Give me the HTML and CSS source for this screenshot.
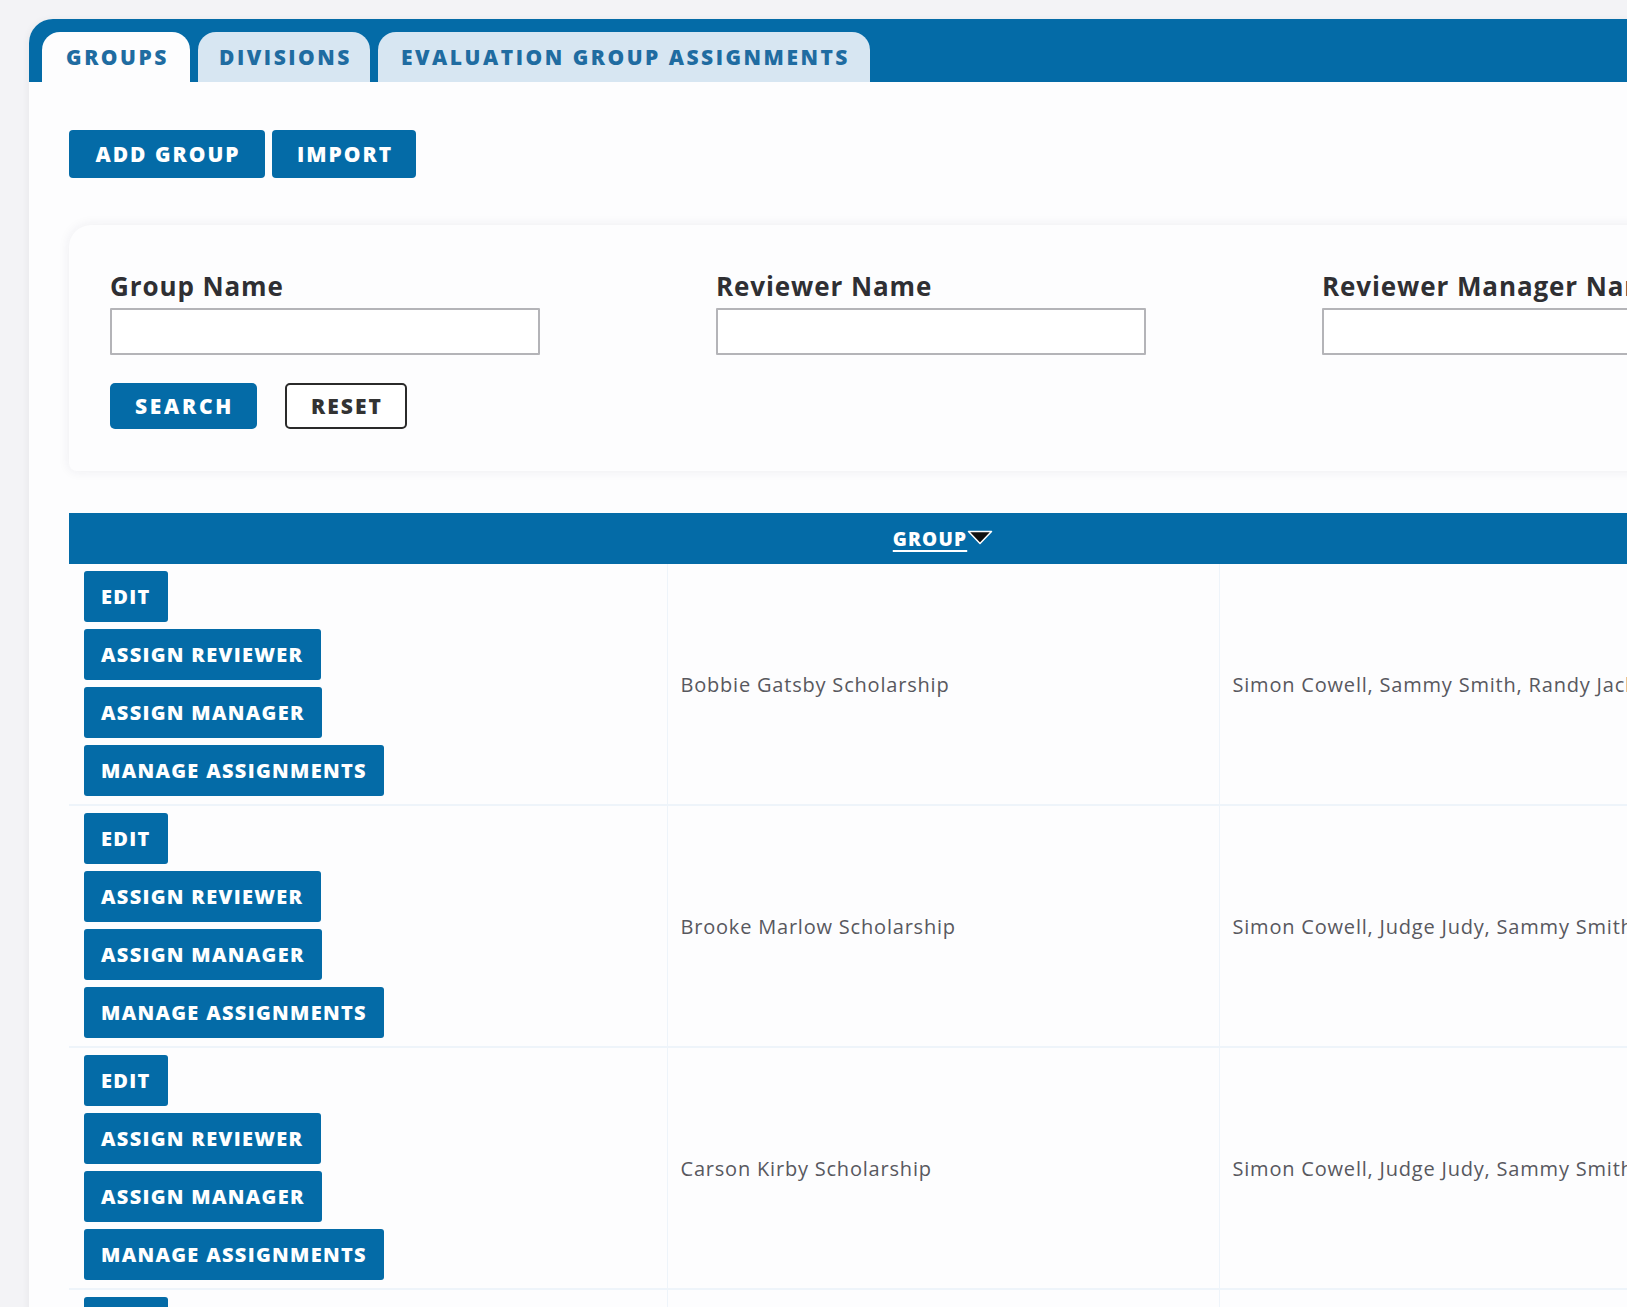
FILE: index.html
```html
<!DOCTYPE html>
<html lang="en">
<head>
<meta charset="utf-8">
<title>Groups</title>
<link rel="stylesheet" href="styles.css">
</head>
<body>
<div class="app">
  <div class="panel">
    <div class="tabbar">
      <div class="tab active">GROUPS</div>
      <div class="tab">DIVISIONS</div>
      <div class="tab">EVALUATION GROUP ASSIGNMENTS</div>
    </div>
    <div class="content">
      <div class="toolbar">
        <button class="btn btn-add">ADD GROUP</button>
        <button class="btn btn-import">IMPORT</button>
      </div>
      <div class="filter-card">
        <div class="fields">
          <div class="field">
            <label class="label">Group Name</label>
            <input class="input" type="text">
          </div>
          <div class="field">
            <label class="label">Reviewer Name</label>
            <input class="input" type="text">
          </div>
          <div class="field">
            <label class="label">Reviewer Manager Name</label>
            <input class="input" type="text">
          </div>
        </div>
        <div class="actions">
          <button class="btn btn-search">SEARCH</button>
          <button class="btn-outline">RESET</button>
        </div>
      </div>
      <table class="grid">
        <colgroup>
          <col class="c1"><col class="c2"><col class="c3">
        </colgroup>
        <thead>
          <tr>
            <th></th>
            <th><span class="sort"><span class="sort-label">GROUP</span><svg class="tri" width="26" height="15" viewBox="0 0 26 15"><path d="M1.5 1.5 H24.5 L13 13.5 Z" fill="#111" stroke="#fff" stroke-width="1.5" stroke-linejoin="round"/></svg></span></th>
            <th></th>
          </tr>
        </thead>
        <tbody>
          <tr>
            <td class="acts">
              <div class="stack">
                <button class="rbtn">EDIT</button>
                <button class="rbtn rbtn-wide">ASSIGN REVIEWER</button>
                <button class="rbtn rbtn-wide">ASSIGN MANAGER</button>
                <button class="rbtn">MANAGE ASSIGNMENTS</button>
              </div>
            </td>
            <td>Bobbie Gatsby Scholarship</td>
            <td>Simon Cowell, Sammy Smith, Randy Jackson</td>
          </tr>
          <tr>
            <td class="acts">
              <div class="stack">
                <button class="rbtn">EDIT</button>
                <button class="rbtn rbtn-wide">ASSIGN REVIEWER</button>
                <button class="rbtn rbtn-wide">ASSIGN MANAGER</button>
                <button class="rbtn">MANAGE ASSIGNMENTS</button>
              </div>
            </td>
            <td>Brooke Marlow Scholarship</td>
            <td>Simon Cowell, Judge Judy, Sammy Smith</td>
          </tr>
          <tr>
            <td class="acts">
              <div class="stack">
                <button class="rbtn">EDIT</button>
                <button class="rbtn rbtn-wide">ASSIGN REVIEWER</button>
                <button class="rbtn rbtn-wide">ASSIGN MANAGER</button>
                <button class="rbtn">MANAGE ASSIGNMENTS</button>
              </div>
            </td>
            <td>Carson Kirby Scholarship</td>
            <td>Simon Cowell, Judge Judy, Sammy Smith</td>
          </tr>
          <tr>
            <td class="acts">
              <div class="stack">
                <button class="rbtn">EDIT</button>
                <button class="rbtn rbtn-wide">ASSIGN REVIEWER</button>
                <button class="rbtn rbtn-wide">ASSIGN MANAGER</button>
                <button class="rbtn">MANAGE ASSIGNMENTS</button>
              </div>
            </td>
            <td>Dana Wells Scholarship</td>
            <td>Simon Cowell, Judge Judy, Sammy Smith</td>
          </tr>
        </tbody>
      </table>
    </div>
  </div>
</div>
</body>
</html>
```

FILE: styles.css
```css
* { box-sizing: border-box; }

html, body {
  margin: 0;
  padding: 0;
  background: #f3f3f6;
  overflow: hidden;
  height: 1307px;
}

body {
  font-family: "Open Sans", "DejaVu Sans", sans-serif;
  color: #333;
}

.app {
  padding: 19px 0 0 29px;
  width: 2400px;
}

.panel {
  background: #fdfdfe;
  border-top-left-radius: 24px;
  min-height: 1400px;
  box-shadow: -2px 0 6px rgba(0, 0, 0, 0.04);
}

.tabbar {
  background: #046ba7;
  height: 63px;
  border-top-left-radius: 24px;
  display: flex;
  align-items: flex-end;
  gap: 8px;
  padding-left: 13px;
}

.tab {
  height: 50px;
  display: flex;
  align-items: center;
  justify-content: center;
  background: #d7e6f2;
  color: #1f6ca1;
  border-radius: 18px 18px 0 0;
  font-family: "Open Sans", "DejaVu Sans", sans-serif;
  font-weight: 800;
  font-size: 21px;
  letter-spacing: 2.5px;
  padding: 0 0 0 3px;
}

.tab.active {
  background: #fdfdfe;
  width: 148px;
}

.tab:nth-child(2) { width: 172px; }
.tab:nth-child(3) { width: 492px; }

.content {
  padding: 48px 0 0 40px;
}

.toolbar {
  display: flex;
  gap: 7px;
}

.btn {
  height: 48px;
  border: none;
  border-radius: 4px;
  background: #046ba7;
  color: #fff;
  font-family: "Open Sans", "DejaVu Sans", sans-serif;
  font-weight: 800;
  font-size: 21px;
  letter-spacing: 2px;
  padding: 0 0 0 2px;
  cursor: pointer;
}

.btn-add { width: 196px; }
.btn-import { width: 144px; }

.filter-card {
  margin-top: 47px;
  background: #fdfdfe;
  border-top-left-radius: 22px;
  border-bottom-left-radius: 8px;
  box-shadow: 0 0 12px rgba(40, 40, 80, 0.08);
  padding: 44px 0 42px 41px;
}

.fields {
  display: grid;
  grid-template-columns: 430px 430px 430px;
  column-gap: 176px;
}

.field {
  display: flex;
  flex-direction: column;
  gap: 5px;
}

.label {
  font-family: "Open Sans", "DejaVu Sans", sans-serif;
  font-weight: 700;
  font-size: 26px;
  line-height: 34px;
  letter-spacing: 0.9px;
  color: #2f2f33;
  white-space: nowrap;
}

.input {
  height: 47px;
  width: 430px;
  border: 2px solid #b4b4b8;
  border-radius: 1px;
  background: #fff;
}

.actions {
  display: flex;
  gap: 28px;
  margin-top: 28px;
}

.btn-search {
  width: 147px;
  height: 46px;
  border-radius: 5px;
  letter-spacing: 2.7px;
}

.btn-outline {
  width: 122px;
  height: 46px;
  border: 2.5px solid #2a2a2a;
  border-radius: 5px;
  background: #fff;
  color: #333;
  font-family: "Open Sans", "DejaVu Sans", sans-serif;
  font-weight: 800;
  font-size: 21px;
  letter-spacing: 2px;
  padding: 0 0 0 2px;
}

.grid {
  margin-top: 42px;
  border-collapse: collapse;
  table-layout: fixed;
  width: 1800px;
  background: #fdfdfe;
}

.c1 { width: 598px; }
.c2 { width: 552px; }
.c3 { width: 650px; }

.grid thead th {
  background: #046ba7;
  height: 51px;
  padding: 0;
  text-align: center;
  vertical-align: middle;
}

.sort {
  display: inline-flex;
  align-items: center;
  gap: 0;
}

.sort-label {
  color: #fff;
  font-family: "Open Sans", "DejaVu Sans", sans-serif;
  font-weight: 800;
  font-size: 19px;
  letter-spacing: 1.2px;
  text-decoration: underline;
  text-underline-offset: 4px;
  text-decoration-thickness: 2px;
}

.tri { display: block; margin-top: -2px; }

.grid tbody td {
  border-bottom: 2px solid #eef4fa;
  border-left: 1px solid #eef4fa;
  padding: 0 13px;
  vertical-align: middle;
  font-family: "Open Sans", "DejaVu Sans", sans-serif;
  font-size: 20px;
  letter-spacing: 0.8px;
  color: #58585e;
  white-space: nowrap;
  overflow: hidden;
}

.grid tbody td.acts {
  border-left: none;
  padding: 7px 14px 8px 15px;
}

.stack {
  display: flex;
  flex-direction: column;
  align-items: flex-start;
  gap: 7px;
}

.rbtn {
  height: 51px;
  border: none;
  border-radius: 3px;
  background: #046ba7;
  color: #fff;
  font-family: "Open Sans", "DejaVu Sans", sans-serif;
  font-weight: 800;
  font-size: 20px;
  letter-spacing: 1.3px;
  padding: 0 17px 0 17px;
  cursor: pointer;
}

.rbtn-wide {
  min-width: 237px;
  text-align: left;
}
```
